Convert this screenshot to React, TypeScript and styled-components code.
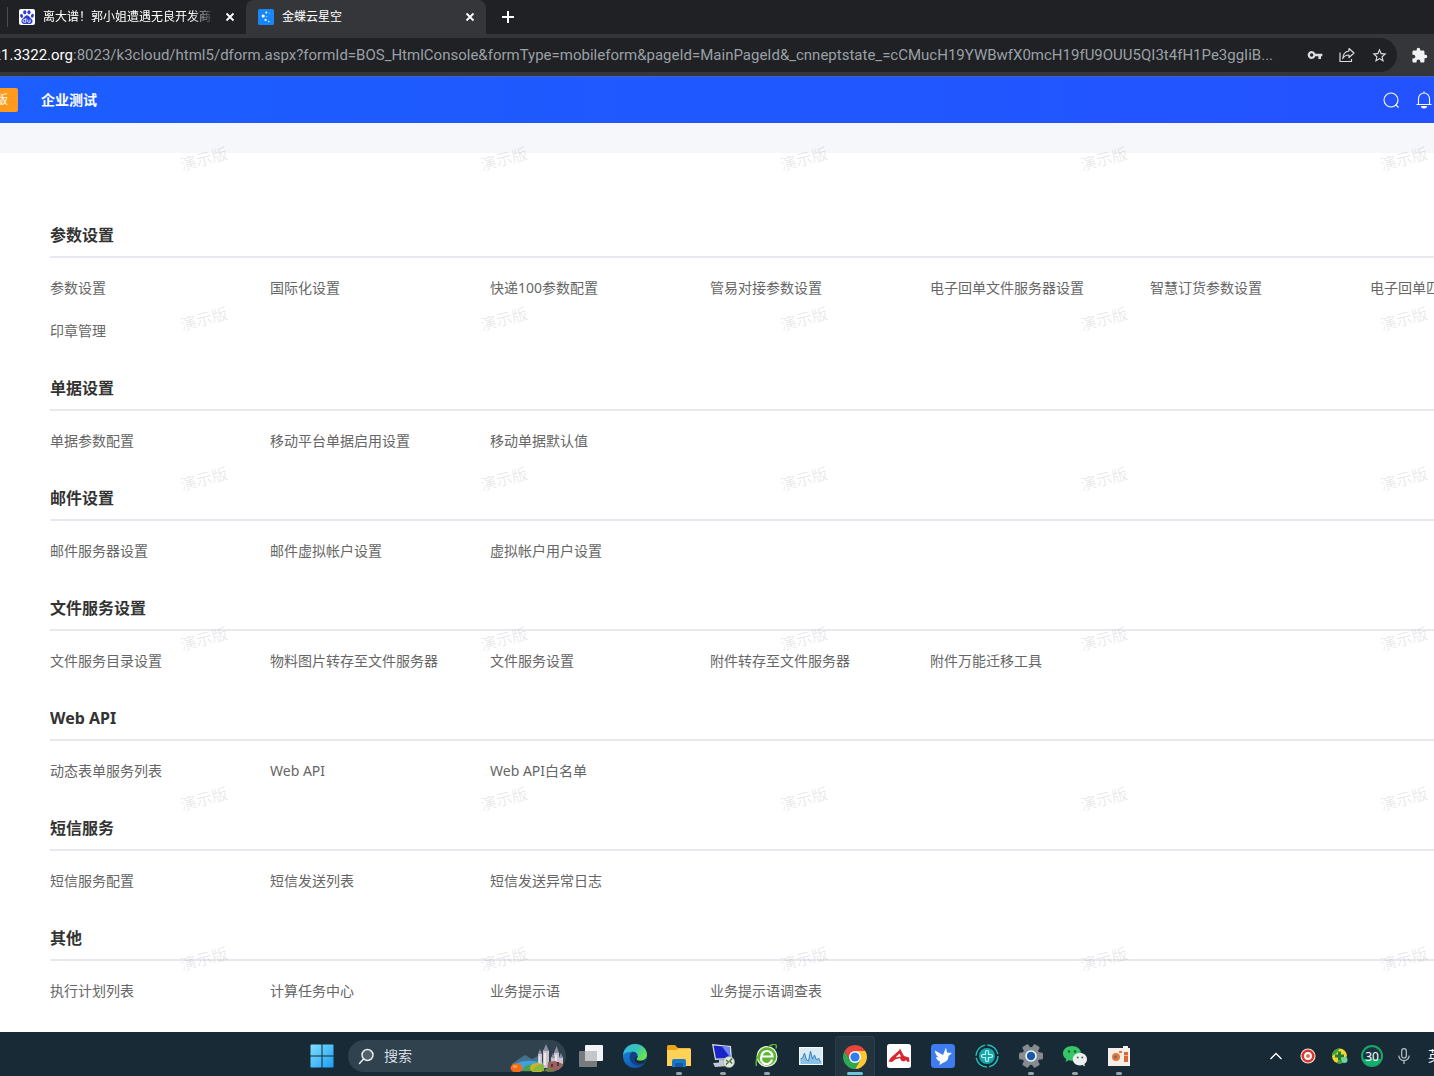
import React from "react";
import styled, { createGlobalStyle, css } from "styled-components";

const sans = `"Noto Sans", "Noto Sans CJK SC", sans-serif`;

const GlobalStyle = createGlobalStyle`
  *, *::before, *::after { box-sizing: border-box; }
  body { margin: 0; background: #fff; font-family: ${sans}; overflow-x: hidden; }
  button, input { font-family: inherit; margin: 0; padding: 0; border: 0; background: none; color: inherit; }
  button { cursor: pointer; }
  svg { display: block; flex: none; }
`;

const Screen = styled.div`
  display: flex;
  flex-direction: column;
  min-height: 100vh;
  overflow: hidden;
`;

/* ---------- Browser chrome ---------- */

const TabStrip = styled.div`
  display: flex;
  height: 34px;
  background: #202124;
  color: #fff;
`;

const Tab = styled.div<{ $active?: boolean }>`
  display: flex;
  align-items: center;
  gap: 8px;
  width: 240px;
  padding: 0 10px 0 12px;
  border-radius: 8px 8px 0 0;
  background: ${(p) => (p.$active ? "#35363a" : "transparent")};
  ${(p) =>
    !p.$active &&
    css`
      width: 246px;
      padding-left: 7px;
      &::before {
        content: "";
        width: 1px;
        height: 20px;
        margin-right: 3px;
        background: #4a4c50;
      }
    `}
`;

const TabTitle = styled.button<{ $faded?: boolean }>`
  flex: 1;
  min-width: 0;
  overflow: hidden;
  text-align: left;
  white-space: nowrap;
  font-size: 12px;
  line-height: 20px;
  ${(p) =>
    p.$faded &&
    css`
      mask-image: linear-gradient(90deg, #000 85%, transparent);
    `}
`;

const IconButton = styled.button<{ $w?: number }>`
  display: flex;
  flex: none;
  align-items: center;
  justify-content: center;
  width: ${(p) => p.$w ?? 32}px;
  height: 32px;
`;

const CloseButton = styled(IconButton)`
  width: 12px;
`;

const NewTabButton = styled(IconButton)`
  width: 44px;
  height: 34px;
`;

const Toolbar = styled.div`
  display: flex;
  align-items: center;
  height: 42px;
  background: #35363a;
  color: #dadce0;
`;

const AddressBar = styled.form`
  display: flex;
  flex: 1;
  align-items: center;
  min-width: 0;
  height: 34px;
  padding-right: 2px;
  border-radius: 0 17px 17px 0;
  background: #202124;
  font-family: Roboto, "Noto Sans", sans-serif;
  font-size: 15px;
  line-height: 24px;
`;

const Host = styled.label`
  display: flex;
  flex: none;
  justify-content: flex-end;
  width: 73px;
  overflow: hidden;
  color: #fff;
`;

const PathInput = styled.input`
  flex: 1;
  min-width: 0;
  height: 24px;
  outline: none;
  font-size: 15px;
  color: #9aa0a6;
  text-overflow: ellipsis;
`;

const Extensions = styled(IconButton)`
  width: 37px;
  padding-left: 7px;
  color: #f1f3f4;
`;

/* ---------- Application ---------- */

const AppHeader = styled.header`
  display: flex;
  align-items: center;
  gap: 13px;
  height: 47px;
  border-top: 1px solid #3f62c4;
  background: linear-gradient(90deg, #1c5eff, #2352ff);
  color: #fff;
`;

const Edition = styled.span`
  display: flex;
  justify-content: flex-end;
  width: 18px;
  padding-right: 10px;
  overflow: hidden;
  border-radius: 0 2px 2px 0;
  background: #ff9a1c;
  font-size: 12px;
  line-height: 24px;
`;

const Company = styled.strong`
  flex: 1;
  padding-left: 10px;
  font-size: 14px;
  line-height: 24px;
`;

const Body = styled.div`
  position: relative;
  flex: 1;
  background: #fff;
`;

const Band = styled.div`
  height: 30px;
  background: #f5f7fb;
`;

const Main = styled.main`
  display: flex;
  flex-direction: column;
  gap: 34px;
  padding: 70px 0 30px 50px;
`;

const Section = styled.section`
  overflow: hidden;
`;

const Heading = styled.h2`
  margin: 0;
  padding-bottom: 9px;
  border-bottom: 2px solid #e8e8f0;
  font-size: 16px;
  font-weight: 700;
  line-height: 24px;
  color: #333;
`;

const LinkGrid = styled.div`
  display: grid;
  grid-template-columns: repeat(7, 220px);
  row-gap: 21px;
  padding-top: 19px;
`;

const ItemLink = styled.a`
  justify-self: start;
  font-size: 14px;
  line-height: 22px;
  white-space: nowrap;
  color: #666;
  text-decoration: none;
`;

const WatermarkLayer = styled.div`
  position: absolute;
  inset: 0;
  display: grid;
  grid-template-columns: repeat(5, 300px);
  grid-auto-rows: 160px;
  justify-items: center;
  padding: 24px 0 0 54px;
  overflow: hidden;
  pointer-events: none;
`;

const Watermark = styled.span`
  height: 24px;
  font-size: 16px;
  line-height: 24px;
  color: rgba(0, 0, 0, 0.1);
  transform: rotate(-15deg);
`;

/* ---------- Taskbar ---------- */

const Taskbar = styled.footer`
  display: flex;
  align-items: center;
  height: 44px;
  padding: 4px 0 0 300px;
  background: #182a35;
  color: #fff;
`;

const TaskButton = styled.button<{ $state?: "open" | "active" }>`
  display: flex;
  flex: none;
  flex-direction: column;
  align-items: center;
  justify-content: center;
  position: relative;
  width: 44px;
  height: 40px;
  ${(p) =>
    p.$state === "active" &&
    css`
      width: 40px;
      margin: 0 2px;
      border: 1px solid #2c3e49;
      border-bottom: 0;
      border-radius: 4px 4px 0 0;
      background: #22343f;
    `}
  ${(p) =>
    p.$state &&
    css`
      &::after {
        content: "";
        position: absolute;
        bottom: 1px;
        width: ${p.$state === "active" ? 16 : 6}px;
        height: 3px;
        border-radius: 2px;
        background: ${p.$state === "active" ? "#6cc5d9" : "#98a2a9"};
      }
    `}
`;

const SearchBox = styled.label`
  display: flex;
  flex: none;
  align-items: center;
  gap: 9px;
  width: 218px;
  height: 32px;
  margin: 0 3px 0 4px;
  padding-left: 10px;
  overflow: hidden;
  border-radius: 16px;
  background: #30424e;
`;

const SearchInput = styled.input`
  flex: 1;
  min-width: 0;
  outline: none;
  font-size: 14px;
  line-height: 20px;
  &::placeholder { color: #d7dee3; opacity: 1; }
`;

const Tray = styled.div`
  display: flex;
  align-items: center;
  margin-left: auto;
`;

const Language = styled.button`
  width: 14px;
  padding-left: 8px;
  overflow: hidden;
  text-align: left;
  font-size: 14px;
  line-height: 20px;
`;

/* ---------- Icons ---------- */

const Cross = () => (
  <svg width="10" height="10" viewBox="0 0 10 10" stroke="#fff" strokeWidth="1.8">
    <path d="M1.5 1.5l7 7M8.5 1.5l-7 7" />
  </svg>
);

const PawIcon = () => (
  <svg width="16" height="16" viewBox="0 0 16 16">
    <rect width="16" height="16" rx="2" fill="#fff" />
    <g fill="#2f3fd6">
      <ellipse cx="2.6" cy="6.9" rx="1.5" ry="2" transform="rotate(-15 2.6 6.9)" />
      <ellipse cx="5.8" cy="3.3" rx="1.6" ry="2.1" />
      <ellipse cx="10" cy="3.3" rx="1.6" ry="2.1" />
      <ellipse cx="13.4" cy="6.7" rx="1.5" ry="2" transform="rotate(15 13.4 6.7)" />
      <path d="M8 6.2c1.8 0 2.4 1.6 3.6 2.8 1.4 1.3 2.4 2.3 1.8 4.2-.6 1.8-2.600 1.900-5.400 1.700-2.800.2-4.800.1-5.400-1.700-.6-1.900.4-2.900 1.800-4.200C5.600 7.800 6.200 6.200 8 6.200z" />
    </g>
    <path d="M6.800 9v4.200H5.300a1.200 1.200 0 010-2.700h1.500M8.700 10.500v2q0 .8.900.8h1.500v-2.800" fill="none" stroke="#fff" strokeWidth=".9" />
  </svg>
);

const KingdeeIcon = () => (
  <svg width="16" height="16" viewBox="0 0 16 16">
    <rect width="16" height="16" rx="1.500" fill="#1686f8" />
    <g fill="#fff">
      <circle cx="8.300" cy="3.500" r="1" />
      <circle cx="5.200" cy="7" r="1.600" />
      <circle cx="8.700" cy="7.600" r=".7" opacity=".6" />
      <circle cx="7.600" cy="10.900" r="1.100" />
      <circle cx="11.300" cy="4.200" r=".6" opacity=".5" />
      <circle cx="10.800" cy="12.500" r=".8" />
    </g>
  </svg>
);

const PlusIcon = () => (
  <svg width="12" height="12" viewBox="0 0 12 12" stroke="#fff" strokeWidth="2">
    <path d="M6 0v12M0 6h12" />
  </svg>
);

const KeyIcon = () => (
  <svg width="16" height="16" viewBox="0 0 24 24" fill="currentColor">
    <path d="M12.650 10A6 6 0 007 6c-3.310 0-6 2.690-6 6s2.690 6 6 6a6 6 0 005.650-4H17v4h4v-4h2v-4H12.650zM7 14.500a2.500 2.500 0 110-5 2.500 2.500 0 010 5z" />
  </svg>
);

const ShareIcon = () => (
  <svg width="16" height="16" viewBox="0 0 16 16" fill="none" stroke="currentColor" strokeWidth="1.200" strokeLinejoin="round">
    <path d="M1 5.500V14.500H12.500V12" />
    <path d="M10 1.500l5 4.500-5 4.500V8C7 8 5 9 3.800 11.500 4 7.500 6 4.500 10 4z" />
  </svg>
);

const StarIcon = () => (
  <svg width="17" height="17" viewBox="0 0 24 24" fill="currentColor">
    <path d="M22 9.240l-7.190-.62L12 2 9.190 8.630 2 9.240l5.460 4.730L5.820 21 12 17.270 18.180 21l-1.630-7.030L22 9.240zM12 15.400l-3.760 2.270 1-4.280-3.320-2.880 4.380-.38L12 6.100l1.710 4.040 4.380.38-3.320 2.880 1 4.280L12 15.400z" />
  </svg>
);

const PuzzleIcon = () => (
  <svg width="17" height="17" viewBox="0 0 24 24" fill="currentColor">
    <path d="M20.500 11H19V7c0-1.100-.9-2-2-2h-4V3.500a2.500 2.500 0 00-5 0V5H4c-1.100 0-1.990.9-1.990 2v3.800H3.500c1.490 0 2.700 1.210 2.700 2.700s-1.210 2.700-2.700 2.700H2V20c0 1.100.9 2 2 2h3.800v-1.500c0-1.490 1.210-2.700 2.700-2.700s2.700 1.210 2.700 2.700V22H17c1.100 0 2-.9 2-2v-4h1.500a2.500 2.500 0 000-5z" />
  </svg>
);

const FindIcon = () => (
  <svg width="18" height="18" viewBox="0 0 18 18" fill="none" stroke="#fff" strokeWidth="1.100">
    <circle cx="9" cy="9" r="7" />
    <path d="M13.500 13.500l3 3" />
  </svg>
);

const BellIcon = () => (
  <svg width="16" height="18" viewBox="0 0 16 18" fill="none" stroke="#fff" strokeWidth="1.100">
    <path d="M8 .5V2M.5 13.500h15M2.500 13.500V7.500a5.500 5.500 0 0111 0v6" />
    <path d="M5 15h6a3 2.500 0 01-6 0z" fill="#fff" stroke="none" />
  </svg>
);

const WindowsIcon = () => (
  <svg width="24" height="24" viewBox="0 0 24 24">
    <defs>
      <linearGradient id="win" x1="0" y1="0" x2="1" y2="1">
        <stop offset="0" stopColor="#7fe0ff" />
        <stop offset="1" stopColor="#1c9df2" />
      </linearGradient>
    </defs>
    <path d="M1 .5h10.500V11.500H.5V1zM12.500.5H23l.5.500v10.500h-11zM.5 12.500h11v11H1l-.5-.5zM12.500 12.500h11V23l-.5.500H12.500z" fill="url(#win)" />
  </svg>
);

const LensIcon = () => (
  <svg width="17" height="17" viewBox="0 0 17 17" fill="#50616b" stroke="#e6ebee" strokeWidth="1.500" strokeLinecap="round">
    <circle cx="9.500" cy="7" r="5.500" />
    <path d="M5.500 11L1.500 15.500" />
  </svg>
);

const CastleArt = () => (
  <svg width="56" height="32" viewBox="0 0 56 32">
    <path d="M2 24l8-6 5-3 7 4 6-3 6 8v6H2z" fill="#46718c" />
    <path d="M5 24q12-6 28-1v8H5z" fill="#3f9fe0" />
    <g fill="#c9c3cf">
      <path d="M28 14h4v14h-4zM33 10h6v18h-6zM41 17h4v12h-4zM44 12h5v18h-5zM49 17h4v13h-4z" />
    </g>
    <g fill="#efe6e4">
      <path d="M34 13h2v12h-2zM29 16h1v10h-1zM45 15h2v12h-2z" />
    </g>
    <g fill="#8c8ea8">
      <path d="M28 14l2-5 2 5zM33 11l3-7 3 7zM41 18l2-5 2 5zM44 13l2.500-7 2.500 7zM49 18l2-5 2 5z" />
    </g>
    <path d="M38 22l7-1 8 3v8H37z" fill="#9b5f5c" />
    <path d="M41 24h2v3h-2zM47 22h2v4h-2z" fill="#54343c" />
    <path d="M12 31q4-8 10-6l5 6z" fill="#4aa04d" />
    <ellipse cx="27" cy="28" rx="7" ry="5" fill="#c7b52c" />
    <path d="M22 31q6-9 12-6v6z" fill="#8db83a" />
    <ellipse cx="6.500" cy="28" rx="6" ry="4.500" fill="#f26b1d" />
    <ellipse cx="5" cy="26.500" rx="2.500" ry="1.500" fill="#ff9b3d" />
    <path d="M34 31q4-5 8-2l3 2z" fill="#5c8c3a" />
  </svg>
);

const TaskViewIcon = () => (
  <svg width="24" height="24" viewBox="0 0 24 24">
    <rect x="6" y="1" width="18" height="16" rx="1" fill="#f1f3f4" />
    <rect x="0" y="7" width="18" height="16" rx="1" fill="#777b7e" />
    <rect x="6" y="7" width="12" height="10" fill="#c4c6c8" />
  </svg>
);

const EdgeIcon = () => (
  <svg width="24" height="24" viewBox="0 0 24 24">
    <defs>
      <linearGradient id="edgeTop" x1="0" y1="0" x2="1" y2=".6">
        <stop offset="0" stopColor="#2fb4ee" />
        <stop offset=".55" stopColor="#35c6b5" />
        <stop offset="1" stopColor="#6ee04e" />
      </linearGradient>
      <linearGradient id="edgeLow" x1="0" y1="0" x2=".8" y2="1">
        <stop offset="0" stopColor="#1b8ede" />
        <stop offset="1" stopColor="#0c4fa5" />
      </linearGradient>
    </defs>
    <circle cx="12" cy="12" r="12" fill="url(#edgeLow)" />
    <path d="M0 11C.8 4.500 5.800 0 12 0c7 0 12 5 12 10.500 0 3.800-2.800 6.300-6.300 6.300-2.700 0-4.200-1-4.200-1.900 0-.7 1.200-1 1.200-3 0-2.200-2.200-4.200-5.200-4.200C5 7.700 1 9 0 11z" fill="url(#edgeTop)" />
    <path d="M9.500 7.700c-4 2.500-3.500 9 .5 12 3.500 2.600 8.500 2 12-1.100-2 1.200-6 1.400-8.500-.6-2-1.600-2.300-4.100-.5-6.300.4-.5 1.300-.5 1.600-.5-.5-2-2.500-3.700-5.100-3.500z" fill="#123f87" />
    <path d="M14.700 11.500c.1 2-1.200 2.600-1.200 3.400 0 .9 1.500 1.900 4.200 1.900 2.500 0 4.500-1 5.500-2.800-.5 2-1.500 4-2.700 5.200-3 1-6 .5-7.800-1.300-2-2-1.200-5.400 2-6.400z" fill="#1a2b36" />
  </svg>
);

const FolderIcon = () => (
  <svg width="24" height="24" viewBox="0 0 24 24">
    <path d="M0 2.500Q0 1 1.500 1H8l3 3h11.500Q24 4 24 5.500V12H0z" fill="#e8a317" />
    <path d="M0 6h9l2-1.500h11.500Q24 4.500 24 6v16H0z" fill="#ffd257" />
    <path d="M5 23v-6q0-2 2-2h10q2 0 2 2v6z" fill="#1877c9" />
    <path d="M8 19h8v4H8z" fill="#0f5ba5" />
  </svg>
);

const RemoteIcon = () => (
  <svg width="24" height="24" viewBox="0 0 24 24">
    <path d="M1 0l19 2 1 13-17 1z" fill="#d8dde6" />
    <path d="M2.500 1.500l16 1.500 1 11L5 14.500z" fill="#1a25c9" />
    <path d="M11 2.500l7.500.5 1 11z" fill="#6e87f2" />
    <path d="M8 16l6-.5 1 3H8zM2 19l13-1 2 4-13 1z" fill="#c3c9d4" />
    <circle cx="18" cy="18" r="5.500" fill="#dfe8dc" stroke="#9aa79a" strokeWidth=".6" />
    <path d="M15 16l2.500 2-2.500 2.500M21 14.500L18.800 17l2.200 2.500" fill="none" stroke="#40693d" strokeWidth="1.300" />
  </svg>
);

const GreenEIcon = () => (
  <svg width="24" height="24" viewBox="0 0 24 24">
    <circle cx="12" cy="12.500" r="10.500" fill="#eef6e4" />
    <circle cx="12" cy="12.500" r="9.300" fill="#5cb531" />
    <path d="M17 15.500A5.500 5.500 0 116.500 12.500a5.500 5.500 0 0111 0H7" fill="none" stroke="#fff" strokeWidth="2.200" />
    <path d="M1.500 22Q0 17 4 10M13 3q5-3.500 7.500-2.500 1.500 1 .5 4" fill="none" stroke="#5cb531" strokeWidth="1.500" />
  </svg>
);

const MonitorIcon = () => (
  <svg width="24" height="18" viewBox="0 0 24 18">
    <rect x=".5" y=".5" width="23" height="17" fill="#dceaf3" stroke="#f5f8fa" />
    <path d="M1.500 12l2-1 2-5 2 7 2 1 2-10 2 8 2-4 2 5 2-2 2 4 1-1v3h-21z" fill="#8cc1e6" />
    <path d="M1.500 12l2-1 2-5 2 7 2 1 2-10 2 8 2-4 2 5 2-2 2 4" fill="none" stroke="#3a86c0" strokeWidth="1" />
  </svg>
);

const ChromeIcon = () => (
  <svg width="24" height="24" viewBox="0 0 24 24">
    <path d="M12 6h10.390A12 12 0 0112 24l5.200-9z" fill="#fcc934" />
    <path d="M17.200 15L12 24A12 12 0 011.610 6l5.200 9z" fill="#2da94f" />
    <path d="M12 6h10.390A12 12 0 001.610 6l5.200 9z" fill="#e8453c" />
    <circle cx="12" cy="12" r="6" fill="#fff" />
    <circle cx="12" cy="12" r="4.600" fill="#2f7df0" />
  </svg>
);

const RedBirdIcon = () => (
  <svg width="24" height="24" viewBox="0 0 24 24">
    <rect width="24" height="24" rx="2.500" fill="#fff" />
    <path d="M1.500 17.500l2-3.500L12 6.500l1-2 1.500 3L17 12l5 1.500.500 4-2 .500-1.500-2-2 1.500-3-1-1-2.500-5 1.500-3 2.500z" fill="#d8262c" />
    <path d="M8.500 13.500l4-4 1.500 3z" fill="#fff" />
  </svg>
);

const BlueBirdIcon = () => (
  <svg width="24" height="24" viewBox="0 0 24 24">
    <rect width="24" height="24" rx="3.500" fill="#3f7cf0" />
    <path d="M4 6.500l8 4.500 3-7.500 1 5 5 .500-3.500 3c0 4-2.500 6-5 6.500L8.500 21l.5-3.500C6.500 16.500 5.500 15 5 13l3 .5C5.500 12 4 9.500 4 6.500z" fill="#fff" />
  </svg>
);

const TealIcon = () => (
  <svg width="24" height="24" viewBox="0 0 24 24" fill="none">
    <circle cx="12" cy="12" r="11" stroke="#22bfc0" strokeWidth="1.400" strokeDasharray="15 2.280" />
    <circle cx="12" cy="12" r="8" fill="#14a9ad" />
    <path d="M10.500 10.500V8a1.500 1.500 0 013 0v2.500H16a1.500 1.500 0 010 3h-2.500V16a1.500 1.500 0 01-3 0v-2.500H8a1.500 1.500 0 010-3z" stroke="#c8f5f0" strokeWidth="1.200" />
  </svg>
);

const GearIcon = () => (
  <svg width="24" height="24" viewBox="0 0 24 24">
    <g fill="#858b91">
      <circle cx="12" cy="12" r="9" />
      {[0, 60, 120].map((a) => (
        <rect key={a} x="8.500" y="0" width="7" height="24" rx="1.500" transform={`rotate(${a + 30} 12 12)`} />
      ))}
    </g>
    <circle cx="12" cy="12" r="5.800" fill="#f4f6f8" />
    <circle cx="12" cy="12" r="4.200" fill="#1758a8" />
  </svg>
);

const WeChatIcon = () => (
  <svg width="24" height="24" viewBox="0 0 24 24">
    <path d="M9 2C4 2 0 5.200 0 9.400c0 2.400 1.300 4.400 3.300 5.700L2.500 18l3.200-1.700c1 .3 2.200.5 3.300.5 5 0 9-3.200 9-7.400S14 2 9 2z" fill="#36c667" />
    <circle cx="6" cy="7.500" r="1.200" fill="#15602f" />
    <circle cx="12" cy="7.500" r="1.200" fill="#15602f" />
    <path d="M17 9c-4 0-7.200 2.700-7.200 6.200s3.200 6.200 7.200 6.200c.9 0 1.700-.1 2.500-.4l2.500 1.500-.6-2.500c1.600-1.200 2.600-2.900 2.600-4.800C24 11.700 21 9 17 9z" fill="#eceff0" />
    <circle cx="14.700" cy="13.500" r="1" fill="#5a6468" />
    <circle cx="19.300" cy="13.500" r="1" fill="#5a6468" />
  </svg>
);

const RecorderIcon = () => (
  <svg width="22" height="20" viewBox="0 0 22 20">
    <path d="M0 2h15V0h5v2h2v18H0z" fill="#f6efe9" />
    <circle cx="8" cy="11" r="4" fill="#e07a3d" />
    <circle cx="7.500" cy="11" r="1.800" fill="#8a6a5a" />
    <path d="M11 5h3v2h-3z" fill="#e07a3d" />
    <path d="M16 6h4v10h-4z" fill="#d96a35" />
    <path d="M16 9h4v1h-4z" fill="#f0b08c" />
  </svg>
);

const ChevronIcon = () => (
  <svg width="14" height="8" viewBox="0 0 14 8" fill="none" stroke="#fff" strokeWidth="1.300">
    <path d="M1.500 7L7 1.500 12.500 7" />
  </svg>
);

const RecordIcon = () => (
  <svg width="16" height="16" viewBox="0 0 16 16">
    <circle cx="8" cy="8" r="7.600" fill="#f6d9d4" />
    <circle cx="8" cy="8" r="5.200" fill="#fff" stroke="#d8392f" strokeWidth="2.600" />
    <circle cx="8" cy="8" r="2" fill="#e46a5f" />
  </svg>
);

const ShieldIcon = () => (
  <svg width="16" height="16" viewBox="0 0 16 16">
    <circle cx="7.500" cy="8" r="7.500" fill="#f2d42e" />
    <path d="M0 8a7.500 7.500 0 017.500-7.500L5 5zM15 8a7.500 7.500 0 01-11 6.600z" fill="#36a63e" />
    <path d="M6 3.500h3V6.500h3v3H9v3H6v-3H3v-3h3z" fill="#1d7f36" />
    <circle cx="12.500" cy="12" r="3" fill="#6fd3a9" />
  </svg>
);

const Meter = () => (
  <svg width="22" height="22" viewBox="0 0 22 22">
    <circle cx="11" cy="11" r="10" fill="#1b3440" stroke="#19a56b" strokeWidth="2" />
    <path d="M2 14h18a9.500 9.500 0 01-18 0z" fill="#13b06b" />
    <text x="11" y="15.500" textAnchor="middle" fontSize="12" fontFamily="Noto Sans" fill="#fff">30</text>
  </svg>
);

const MicIcon = () => (
  <svg width="12" height="16" viewBox="0 0 12 16" fill="none" stroke="#b9c6cc" strokeWidth="1.200">
    <rect x="3.700" y=".7" width="4.600" height="9.300" rx="2.300" />
    <path d="M.8 7.500a5.200 5.200 0 0010.400 0M6 12.700V16" />
  </svg>
);

/* ---------- Data ---------- */

const sections: { title: string; items: string[] }[] = [
  {
    title: "参数设置",
    items: ["参数设置", "国际化设置", "快递100参数配置", "管易对接参数设置", "电子回单文件服务器设置", "智慧订货参数设置", "电子回单匹配设置", "印章管理"],
  },
  { title: "单据设置", items: ["单据参数配置", "移动平台单据启用设置", "移动单据默认值"] },
  { title: "邮件设置", items: ["邮件服务器设置", "邮件虚拟帐户设置", "虚拟帐户用户设置"] },
  {
    title: "文件服务设置",
    items: ["文件服务目录设置", "物料图片转存至文件服务器", "文件服务设置", "附件转存至文件服务器", "附件万能迁移工具"],
  },
  { title: "Web API", items: ["动态表单服务列表", "Web API", "Web API白名单"] },
  { title: "短信服务", items: ["短信服务配置", "短信发送列表", "短信发送异常日志"] },
  { title: "其他", items: ["执行计划列表", "计算任务中心", "业务提示语", "业务提示语调查表"] },
];

const tasks: { name: string; icon: React.ReactNode; state?: "open" | "active" }[] = [
  { name: "任务视图", icon: <TaskViewIcon /> },
  { name: "Edge", icon: <EdgeIcon /> },
  { name: "文件资源管理器", icon: <FolderIcon />, state: "open" },
  { name: "远程桌面", icon: <RemoteIcon />, state: "open" },
  { name: "浏览器", icon: <GreenEIcon />, state: "open" },
  { name: "性能监视器", icon: <MonitorIcon /> },
  { name: "Chrome", icon: <ChromeIcon />, state: "active" },
  { name: "红鸟", icon: <RedBirdIcon /> },
  { name: "蓝鸟", icon: <BlueBirdIcon /> },
  { name: "助手", icon: <TealIcon /> },
  { name: "设置", icon: <GearIcon />, state: "open" },
  { name: "微信", icon: <WeChatIcon />, state: "open" },
  { name: "录屏", icon: <RecorderIcon />, state: "open" },
];

const tray: { name: string; icon: React.ReactNode }[] = [
  { name: "显示隐藏的图标", icon: <ChevronIcon /> },
  { name: "录制", icon: <RecordIcon /> },
  { name: "安全", icon: <ShieldIcon /> },
  { name: "加速", icon: <Meter /> },
  { name: "麦克风", icon: <MicIcon /> },
];

const path =
  ":8023/k3cloud/html5/dform.aspx?formId=BOS_HtmlConsole&formType=mobileform&pageId=MainPageId&_cnneptstate_=cCMucH19YWBwfX0mcH19fU9OUU5QI3t4fH1Pe3ggIiB...";

export default function App() {
  return (
    <Screen>
      <GlobalStyle />
      <TabStrip>
        <Tab>
          <PawIcon />
          <TabTitle $faded>离大谱！郭小姐遭遇无良开发商</TabTitle>
          <CloseButton aria-label="关闭"><Cross /></CloseButton>
        </Tab>
        <Tab $active>
          <KingdeeIcon />
          <TabTitle>金蝶云星空</TabTitle>
          <CloseButton aria-label="关闭"><Cross /></CloseButton>
        </Tab>
        <NewTabButton aria-label="新标签页"><PlusIcon /></NewTabButton>
      </TabStrip>

      <Toolbar>
        <AddressBar onSubmit={(e) => e.preventDefault()}>
          <Host htmlFor="address">21.3322.org</Host>
          <PathInput id="address" defaultValue={path} spellCheck={false} />
          <IconButton type="button" aria-label="密码"><KeyIcon /></IconButton>
          <IconButton type="button" aria-label="分享"><ShareIcon /></IconButton>
          <IconButton type="button" aria-label="收藏"><StarIcon /></IconButton>
        </AddressBar>
        <Extensions aria-label="扩展程序"><PuzzleIcon /></Extensions>
      </Toolbar>

      <AppHeader>
        <Edition>版</Edition>
        <Company>企业测试</Company>
        <IconButton $w={20} aria-label="搜索"><FindIcon /></IconButton>
        <IconButton $w={20} aria-label="通知"><BellIcon /></IconButton>
      </AppHeader>

      <Body>
        <Band />
        <Main>
          {sections.map((s) => (
            <Section key={s.title}>
              <Heading>{s.title}</Heading>
              <LinkGrid>
                {s.items.map((item) => (
                  <ItemLink key={item} href="#">{item}</ItemLink>
                ))}
              </LinkGrid>
            </Section>
          ))}
        </Main>
        <WatermarkLayer aria-hidden="true">
          {Array.from({ length: 30 }, (_, i) => (
            <Watermark key={i}>演示版</Watermark>
          ))}
        </WatermarkLayer>
      </Body>

      <Taskbar>
        <TaskButton aria-label="开始"><WindowsIcon /></TaskButton>
        <SearchBox>
          <LensIcon />
          <SearchInput placeholder="搜索" aria-label="搜索" />
          <CastleArt />
        </SearchBox>
        {tasks.map((t) => (
          <TaskButton key={t.name} aria-label={t.name} $state={t.state}>{t.icon}</TaskButton>
        ))}
        <Tray>
          {tray.map((t) => (
            <IconButton key={t.name} aria-label={t.name}>{t.icon}</IconButton>
          ))}
          <Language>英</Language>
        </Tray>
      </Taskbar>
    </Screen>
  );
}
